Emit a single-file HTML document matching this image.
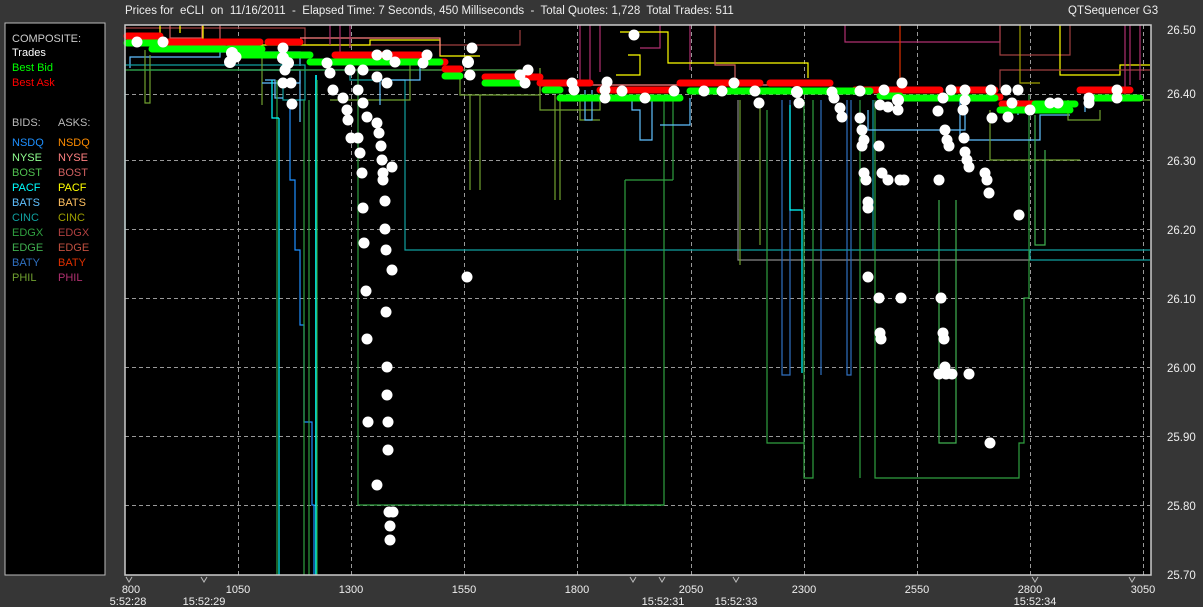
<!DOCTYPE html>
<html><head><meta charset="utf-8"><style>
html,body{margin:0;padding:0;background:#363636;}
body{width:1203px;height:607px;overflow:hidden;position:relative;font-family:"Liberation Sans",sans-serif;}
.t{position:absolute;color:#eee;font-size:11px;white-space:nowrap;}
</style></head><body>
<div class="t" style="left:125px;top:5px;font-size:11.5px;">Prices for&nbsp; eCLI&nbsp; on&nbsp; 11/16/2011&nbsp; -&nbsp; Elapsed Time: 7 Seconds, 450 Milliseconds&nbsp; -&nbsp; Total Quotes: 1,728&nbsp; Total Trades: 511</div>
<div class="t" style="left:1068px;top:5px;font-size:11.5px;">QTSequencer G3</div>
<svg width="1203" height="607" style="position:absolute;left:0;top:0" font-family="Liberation Sans, sans-serif">
<rect x="5" y="23" width="100" height="552" fill="#000" stroke="#bbb" stroke-width="1"/>
<g font-size="11">
<text x="12" y="42" fill="#ccc">COMPOSITE:</text>
<text x="12" y="56" fill="#fff">Trades</text>
<text x="12" y="71" fill="#0f0">Best Bid</text>
<text x="12" y="86" fill="#f00">Best Ask</text>
<text x="12" y="126" fill="#bbb">BIDS:</text><text x="58" y="126" fill="#bbb">ASKS:</text>
<text x="12" y="146" fill="#1e90ff">NSDQ</text><text x="58" y="146" fill="#ff8c00">NSDQ</text>
<text x="12" y="161" fill="#90ff90">NYSE</text><text x="58" y="161" fill="#ff8080">NYSE</text>
<text x="12" y="176" fill="#50c050">BOST</text><text x="58" y="176" fill="#d06060">BOST</text>
<text x="12" y="191" fill="#00ffff">PACF</text><text x="58" y="191" fill="#ffff00">PACF</text>
<text x="12" y="206" fill="#60c0ff">BATS</text><text x="58" y="206" fill="#ffc060">BATS</text>
<text x="12" y="221" fill="#10a0a0">CINC</text><text x="58" y="221" fill="#a0a000">CINC</text>
<text x="12" y="236" fill="#30a040">EDGX</text><text x="58" y="236" fill="#b04040">EDGX</text>
<text x="12" y="251" fill="#40b050">EDGE</text><text x="58" y="251" fill="#c05040">EDGE</text>
<text x="12" y="266" fill="#3070c0">BATY</text><text x="58" y="266" fill="#e03000">BATY</text>
<text x="12" y="281" fill="#70a030">PHIL</text><text x="58" y="281" fill="#b03070">PHIL</text>
</g>
<rect x="125" y="25" width="1026" height="550" fill="#000"/>
<g stroke="#999" stroke-dasharray="4,3" stroke-width="1">
<line x1="125" x2="1150" y1="94.5" y2="94.5"/><line x1="125" x2="1150" y1="160.5" y2="160.5"/>
<line x1="125" x2="1150" y1="229.5" y2="229.5"/><line x1="125" x2="1150" y1="298.5" y2="298.5"/>
<line x1="125" x2="1150" y1="367.5" y2="367.5"/><line x1="125" x2="1150" y1="436.5" y2="436.5"/>
<line x1="125" x2="1150" y1="505.5" y2="505.5"/>
<line x1="238.5" x2="238.5" y1="25" y2="575"/><line x1="351.5" x2="351.5" y1="25" y2="575"/>
<line x1="464.5" x2="464.5" y1="25" y2="575"/><line x1="577.5" x2="577.5" y1="25" y2="575"/>
<line x1="691.5" x2="691.5" y1="25" y2="575"/><line x1="804.5" x2="804.5" y1="25" y2="575"/>
<line x1="917.5" x2="917.5" y1="25" y2="575"/><line x1="1030.5" x2="1030.5" y1="25" y2="575"/>
<line x1="1143.5" x2="1143.5" y1="25" y2="575"/>
</g>
<g fill="none" stroke-width="1.2">
<!-- top ask lines -->
<path d="M125 28H305V45H520V30" stroke="#a04040"/>
<path d="M170 25V38H202V25 M220 25V40" stroke="#d06060"/>
<path d="M160 25V35 M180 25V33 M203 25V45H370V40H440V56H480" stroke="#ffff00"/>
<path d="M300 38H440V55" stroke="#ff8080"/>
<path d="M330 25V45 M340 25V55 M350 25V48" stroke="#b03070"/>
<path d="M580 25V80 M590 25V85 M600 25V72 M660 25V48H640 M690 25V70" stroke="#b03070"/>
<path d="M620 32H668V63H808V78" stroke="#ffff00"/>
<path d="M616 75H640V55H628" stroke="#ffff00"/>
<path d="M715 25V65H735V82" stroke="#d06060"/>
<path d="M845 25V42H1000V25" stroke="#b03070"/>
<path d="M1000 25V55H1070V25" stroke="#a04040"/>
<path d="M1060 25V75H1120V65H1150" stroke="#ffff00"/>
<path d="M1000 90V70H1150" stroke="#a04040"/>
<path d="M1125 25V100 M1130 25V85 M1140 25V80" stroke="#b03070"/>
<path d="M1020 25V83H1040" stroke="#a0a000"/>
<path d="M900 25V85" stroke="#e03000"/>
<path d="M540 85H830" stroke="#ff8080"/>
<path d="M420 70H520V80" stroke="#d06060"/>
<!-- bid lines -->
<path d="M130 68V57H220V52H300V66" stroke="#60c0ff"/>
<path d="M125 60V250" stroke="#00ffff"/>
<path d="M125 65H305V100H283V80" stroke="#10a0a0"/>
<path d="M130 70H350V80H405V250H1030V260H1150" stroke="#10a0a0"/>
<path d="M145 50V103H150V55" stroke="#70a030"/>
<path d="M262 55V105" stroke="#70a030"/>
<path d="M240 70H300V83H262" stroke="#60c0ff"/>
<path d="M300 80V122" stroke="#60c0ff"/>
<path d="M125 70H530" stroke="#30a040"/>
<path d="M265 80H275V98H283" stroke="#60c0ff"/>
<path d="M277 80V575" stroke="#30a040"/>
<path d="M279 118V575 M272 80V118H279" stroke="#00ffff"/>
<path d="M290 100V180H295V250H300V325H304V422H312V505H314V575" stroke="#1e90ff"/>
<path d="M304 100V575 M309 100V575" stroke="#30a040"/>
<path d="M316 75V575" stroke="#00ffff" stroke-width="1.6"/>
<path d="M317 80V575" stroke="#30a040"/>
<path d="M358 68V505H664V98" stroke="#30a040"/>
<path d="M330 100H410V60" stroke="#70a030"/>
<path d="M420 60V80H380V105" stroke="#60c0ff"/>
<path d="M460 70V95H540V68" stroke="#70a030"/>
<path d="M470 95V190 M480 95V190" stroke="#70a030"/>
<path d="M540 68V110H600V97" stroke="#70a030"/>
<path d="M555 95V200 M560 95V200 M580 95V120H600" stroke="#70a030"/>
<path d="M585 90V120H592V90" stroke="#60c0ff"/>
<path d="M632 95V110H640V140H652V95" stroke="#60c0ff"/>
<path d="M673 98V180 M625 180H673" stroke="#30a040"/>
<path d="M625 180V505H664" stroke="#30a040"/>
<path d="M690 98V125H660" stroke="#60c0ff"/>
<path d="M738 100V260H1030" stroke="#888"/>
<path d="M740 100V265 M760 105V245" stroke="#70a030"/>
<path d="M767 110V443H804" stroke="#30a040"/>
<path d="M782 100V375H790V100 M821 100V375 M847 100V375H851V100" stroke="#3070c0"/>
<path d="M790 105V210H802V373" stroke="#00ffff"/>
<path d="M804 100V478H813V100 M860 100V478 M875 100V478H1019V443H1024V298H1029V95" stroke="#30a040"/>
<path d="M939 200V443H956V200" stroke="#40b050"/>
<path d="M873 100V250" stroke="#10a0a0"/>
<path d="M868 110V130H965V100" stroke="#60c0ff"/>
<path d="M960 100V140H1040V115H1070" stroke="#60c0ff"/>
<path d="M990 110V160H1080" stroke="#70a030"/>
<path d="M1035 115V245H1045V150" stroke="#40b050"/>
<path d="M1030 250H1150" stroke="#10a0a0"/>
<path d="M1068 100V120H1100V110" stroke="#70a030"/>
<path d="M1100 100H1150" stroke="#70a030"/>
<path d="M1018 100V115 M1085 100V112" stroke="#60c0ff"/>
</g>
<!-- ask band -->
<g fill="none" stroke="#ff0000" stroke-width="7" stroke-linecap="round">
<path d="M127 36H160 M162 42H260 M268 42H300"/>
<path d="M335 55H420 M420 62H445 M445 69H460 M485 77H540"/>
<path d="M540 83H590 M600 90H670 M680 83H760 M770 83H830 M855 90H940 M950 90H995"/>
<path d="M990 97H1000 M1002 104H1070 M1080 90H1130"/>
</g>
<g fill="none" stroke="#00ff00" stroke-width="7" stroke-linecap="round">
<path d="M127 43H158 M152 49H225 M228 49H262 M237 55H310"/>
<path d="M310 62H380 M380 62H440 M445 76H460 M485 83H525"/>
<path d="M545 90H560 M560 98H580 M582 98H680 M690 91H790 M800 91H870 M880 96H900 M905 98H995"/>
<path d="M1000 110H1070 M1035 104H1075 M1095 98H1140"/>
</g>
<g fill="#fff">
<circle cx="137" cy="42" r="5.5"/><circle cx="163" cy="42" r="5.5"/><circle cx="232" cy="53" r="6"/><circle cx="230" cy="62" r="6"/><circle cx="236" cy="57" r="5.5"/>
<circle cx="283" cy="48" r="5.5"/><circle cx="283" cy="58" r="6"/><circle cx="288" cy="63" r="6"/><circle cx="285" cy="70" r="5.5"/><circle cx="283" cy="83" r="5.5"/><circle cx="291" cy="83" r="5.5"/><circle cx="292" cy="104" r="5.5"/>
<circle cx="327" cy="63" r="5.5"/><circle cx="330" cy="73" r="5.5"/><circle cx="333" cy="90" r="5.5"/><circle cx="343" cy="98" r="5.5"/><circle cx="347" cy="110" r="5.5"/><circle cx="348" cy="120" r="5.5"/>
<circle cx="351" cy="138" r="5.5"/><circle cx="358" cy="138" r="5.5"/><circle cx="360" cy="153" r="5.5"/><circle cx="362" cy="173" r="5.5"/><circle cx="363" cy="208" r="5.5"/><circle cx="364" cy="243" r="5.5"/><circle cx="366" cy="291" r="5.5"/>
<circle cx="350" cy="70" r="5.5"/><circle cx="363" cy="70" r="5.5"/><circle cx="358" cy="90" r="5.5"/><circle cx="363" cy="103" r="5.5"/><circle cx="367" cy="117" r="5.5"/><circle cx="377" cy="123" r="5.5"/><circle cx="379" cy="133" r="5.5"/><circle cx="381" cy="146" r="5.5"/>
<circle cx="382" cy="160" r="5.5"/><circle cx="383" cy="173" r="5.5"/><circle cx="383" cy="180" r="5.5"/><circle cx="392" cy="167" r="5.5"/><circle cx="385" cy="201" r="5.5"/><circle cx="385" cy="229" r="5.5"/><circle cx="386" cy="250" r="5.5"/><circle cx="392" cy="270" r="5.5"/><circle cx="467" cy="277" r="5.5"/>
<circle cx="377" cy="55" r="5.5"/><circle cx="387" cy="55" r="5.5"/><circle cx="395" cy="62" r="5.5"/><circle cx="423" cy="63" r="5.5"/><circle cx="427" cy="55" r="5.5"/><circle cx="472" cy="48" r="5.5"/><circle cx="468" cy="62" r="6"/><circle cx="470" cy="75" r="5.5"/>
<circle cx="520" cy="75" r="5.5"/><circle cx="528" cy="70" r="5.5"/><circle cx="525" cy="83" r="5.5"/><circle cx="377" cy="77" r="5.5"/><circle cx="387" cy="83" r="5.5"/>
<circle cx="386" cy="312" r="5.5"/><circle cx="367" cy="339" r="5.5"/><circle cx="387" cy="367" r="5.5"/><circle cx="387" cy="395" r="5.5"/><circle cx="368" cy="422" r="5.5"/><circle cx="388" cy="422" r="5.5"/><circle cx="388" cy="450" r="5.5"/><circle cx="377" cy="485" r="5.5"/>
<circle cx="389" cy="512" r="5.5"/><circle cx="393" cy="512" r="5.5"/><circle cx="390" cy="526" r="5.5"/><circle cx="390" cy="540" r="5.5"/>
<circle cx="634" cy="35" r="5.5"/><circle cx="607" cy="82" r="5.5"/><circle cx="605" cy="90" r="5.5"/><circle cx="605" cy="98" r="5.5"/><circle cx="574" cy="90" r="5.5"/><circle cx="572" cy="83" r="5.5"/><circle cx="622" cy="91" r="5.5"/><circle cx="645" cy="98" r="5.5"/><circle cx="674" cy="91" r="5.5"/>
<circle cx="704" cy="91" r="5.5"/><circle cx="722" cy="91" r="5.5"/><circle cx="734" cy="83" r="5.5"/><circle cx="755" cy="91" r="5.5"/><circle cx="759" cy="103" r="5.5"/><circle cx="797" cy="92" r="6"/><circle cx="799" cy="103" r="5.5"/><circle cx="832" cy="92" r="5.5"/><circle cx="834" cy="98" r="5.5"/>
<circle cx="840" cy="108" r="5.5"/><circle cx="842" cy="117" r="5.5"/><circle cx="860" cy="118" r="5.5"/><circle cx="862" cy="130" r="5.5"/><circle cx="864" cy="140" r="5.5"/><circle cx="862" cy="146" r="5.5"/><circle cx="879" cy="146" r="5.5"/>
<circle cx="864" cy="173" r="5.5"/><circle cx="866" cy="180" r="5.5"/><circle cx="882" cy="173" r="5.5"/><circle cx="888" cy="180" r="5.5"/><circle cx="900" cy="180" r="5.5"/><circle cx="904" cy="180" r="5.5"/><circle cx="868" cy="202" r="5.5"/><circle cx="868" cy="208" r="5.5"/>
<circle cx="868" cy="277" r="5.5"/><circle cx="879" cy="298" r="5.5"/><circle cx="901" cy="298" r="5.5"/><circle cx="941" cy="298" r="5.5"/><circle cx="939" cy="180" r="5.5"/><circle cx="945" cy="130" r="5.5"/><circle cx="947" cy="140" r="5.5"/><circle cx="949" cy="146" r="5.5"/>
<circle cx="965" cy="152" r="5.5"/><circle cx="967" cy="160" r="5.5"/><circle cx="969" cy="167" r="5.5"/><circle cx="964" cy="138" r="5.5"/><circle cx="985" cy="173" r="5.5"/><circle cx="987" cy="180" r="5.5"/><circle cx="989" cy="193" r="5.5"/><circle cx="1019" cy="215" r="5.5"/>
<circle cx="938" cy="111" r="5.5"/><circle cx="963" cy="110" r="5.5"/><circle cx="991" cy="90" r="5.5"/><circle cx="1006" cy="90" r="5.5"/><circle cx="1018" cy="90" r="5.5"/><circle cx="1012" cy="103" r="5.5"/><circle cx="1008" cy="117" r="5.5"/><circle cx="992" cy="118" r="5.5"/>
<circle cx="1030" cy="110" r="5.5"/><circle cx="1050" cy="103" r="5.5"/><circle cx="1058" cy="103" r="5.5"/><circle cx="1089" cy="98" r="5.5"/><circle cx="1089" cy="103" r="5.5"/><circle cx="1117" cy="90" r="5.5"/><circle cx="1117" cy="98" r="5.5"/>
<circle cx="884" cy="90" r="5.5"/><circle cx="898" cy="100" r="6"/><circle cx="902" cy="83" r="5.5"/><circle cx="888" cy="107" r="5.5"/><circle cx="898" cy="110" r="5.5"/><circle cx="951" cy="90" r="5.5"/><circle cx="965" cy="90" r="5.5"/><circle cx="965" cy="100" r="5.5"/><circle cx="943" cy="98" r="5.5"/><circle cx="860" cy="91" r="5.5"/><circle cx="880" cy="105" r="5.5"/>
<circle cx="880" cy="333" r="5.5"/><circle cx="881" cy="339" r="5.5"/><circle cx="943" cy="333" r="5.5"/><circle cx="944" cy="339" r="5.5"/><circle cx="945" cy="367" r="5.5"/><circle cx="939" cy="374" r="5.5"/><circle cx="946" cy="374" r="5.5"/><circle cx="952" cy="374" r="5.5"/><circle cx="969" cy="374" r="5.5"/><circle cx="990" cy="443" r="5.5"/>
</g>
<rect x="125" y="25" width="1026" height="550" fill="none" stroke="#ccc" stroke-width="1.5"/>
<g fill="none" stroke="#bbb" stroke-width="1">
<path d="M126 577l3 5 3-5 M201 577l3 5 3-5 M630 577l3 5 3-5 M659 577l3 5 3-5 M733 577l3 5 3-5 M1032 577l3 5 3-5 M1129 577l3 5 3-5"/>
</g>
<g font-size="11" fill="#eee" text-anchor="middle">
<text x="131" y="593">800</text><text x="238" y="593">1050</text><text x="351" y="593">1300</text><text x="464" y="593">1550</text><text x="577" y="593">1800</text><text x="691" y="593">2050</text>
<text x="804" y="593">2300</text><text x="917" y="593">2550</text><text x="1030" y="593">2800</text><text x="1143" y="593">3050</text>
<text x="128" y="605">5:52:28</text><text x="204" y="605">15:52:29</text><text x="663" y="605">15:52:31</text><text x="736" y="605">15:52:33</text><text x="1035" y="605">15:52:34</text>
</g>
<g font-size="11.5" fill="#eee">
<text x="1167" y="34">26.50</text><text x="1167" y="98">26.40</text><text x="1167" y="165">26.30</text><text x="1167" y="234">26.20</text>
<text x="1167" y="303">26.10</text><text x="1167" y="372">26.00</text><text x="1167" y="441">25.90</text><text x="1167" y="510">25.80</text><text x="1167" y="579">25.70</text>
</g>
</svg>
</body></html>
